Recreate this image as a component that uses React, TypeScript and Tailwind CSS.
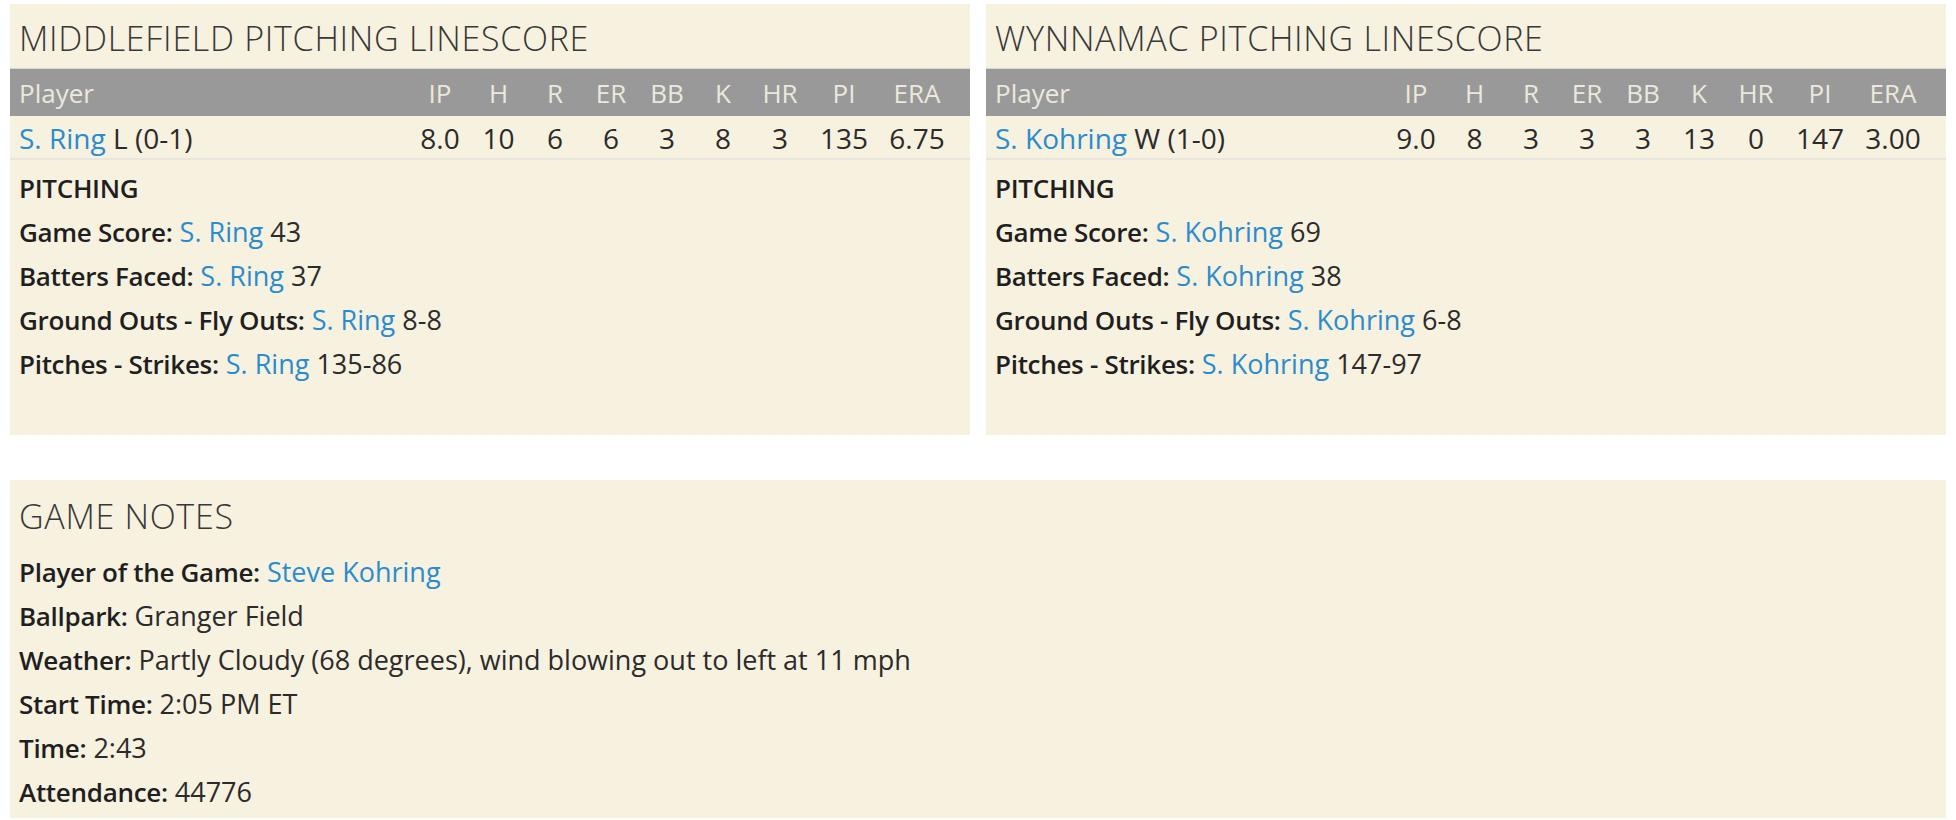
import React from "react";

type PitcherLine = {
  name: string;
  decision: string;
  stats: string[];
};

type PitchingPanel = {
  team: string;
  line: PitcherLine;
  notes: { label: string; value: string }[];
};

const columns = ["IP", "H", "R", "ER", "BB", "K", "HR", "PI", "ERA"];

const panels: PitchingPanel[] = [
  {
    team: "MIDDLEFIELD",
    line: {
      name: "S. Ring",
      decision: "L (0-1)",
      stats: ["8.0", "10", "6", "6", "3", "8", "3", "135", "6.75"],
    },
    notes: [
      { label: "Game Score:", value: "43" },
      { label: "Batters Faced:", value: "37" },
      { label: "Ground Outs - Fly Outs:", value: "8-8" },
      { label: "Pitches - Strikes:", value: "135-86" },
    ],
  },
  {
    team: "WYNNAMAC",
    line: {
      name: "S. Kohring",
      decision: "W (1-0)",
      stats: ["9.0", "8", "3", "3", "3", "13", "0", "147", "3.00"],
    },
    notes: [
      { label: "Game Score:", value: "69" },
      { label: "Batters Faced:", value: "38" },
      { label: "Ground Outs - Fly Outs:", value: "6-8" },
      { label: "Pitches - Strikes:", value: "147-97" },
    ],
  },
];

const gameNotes = [
  { label: "Player of the Game:", value: "Steve Kohring", link: true },
  { label: "Ballpark:", value: "Granger Field" },
  { label: "Weather:", value: "Partly Cloudy (68 degrees), wind blowing out to left at 11 mph" },
  { label: "Start Time:", value: "2:05 PM ET" },
  { label: "Time:", value: "2:43" },
  { label: "Attendance:", value: "44776" },
];

const gridCols =
  "grid grid-cols-[1fr_60px_57px_56px_56px_56px_56px_58px_70px_76px] pr-[15px]";

function Label({ children }: { children: React.ReactNode }) {
  return <span className="font-semibold text-[26px] tracking-[-0.3px] text-[#1f1f1f]">{children}</span>;
}

function Linescore({ panel }: { panel: PitchingPanel }) {
  return (
    <div className="flex-1 bg-[#f7f1df] pt-[12px] pb-[49px]">
      <h2 className="px-[9px] mb-[8px] text-[34px] tracking-[0.7px] leading-[44px] font-light text-[#383838] whitespace-nowrap">
        {panel.team} PITCHING LINESCORE
      </h2>

      {/* header row */}
      <div className={`${gridCols} bg-[#999999] border-t border-[#d9d5c8] h-[48px] items-center text-[26px] text-[#ebe8dd] leading-[48px]`}>
        <div className="pl-[9px]">Player</div>
        {columns.map((c) => (
          <div key={c} className="text-center">
            {c}
          </div>
        ))}
      </div>

      {/* pitcher row */}
      <div className={`${gridCols} h-[44px] leading-[44px] text-[28px] text-[#2b2b2b] border-b-2 border-[#e9e6df]`}>
        <div className="pl-[9px] whitespace-nowrap">
          <span className="text-[#2a8ccd]">{panel.line.name}</span> {panel.line.decision}
        </div>
        {panel.line.stats.map((s, i) => (
          <div key={i} className="text-center">
            {s}
          </div>
        ))}
      </div>

      <div className="px-[9px] pt-[6px] leading-[44px] text-[#2b2b2b]">
        <div>
          <Label>PITCHING</Label>
        </div>
        {panel.notes.map((n) => (
          <div key={n.label} className="whitespace-nowrap">
            <Label>{n.label}</Label> <span className="text-[#2a8ccd]">{panel.line.name}</span> {n.value}
          </div>
        ))}
      </div>
    </div>
  );
}

export default function App() {
  return (
    <div
      className="w-[1956px] h-[820px] overflow-hidden bg-white px-[10px] pt-[4px] text-[27px]"
      style={{ fontFamily: '"Open Sans", "Noto Sans", sans-serif' }}
    >
      <div className="flex gap-[16px]">
        {panels.map((p) => (
          <Linescore key={p.team} panel={p} />
        ))}
      </div>

      <div className="mt-[45px] bg-[#f7f1df] px-[9px] pt-[14px] pb-[4px]">
        <h2 className="mb-[12px] text-[34px] tracking-[0.7px] leading-[44px] font-light text-[#383838]">GAME NOTES</h2>
        <div className="leading-[44px] text-[#2b2b2b]">
          {gameNotes.map((n) => (
            <div key={n.label} className="whitespace-nowrap">
              <Label>{n.label}</Label>{" "}
              {n.link ? <span className="text-[#2a8ccd]">{n.value}</span> : n.value}
            </div>
          ))}
        </div>
      </div>
    </div>
  );
}
